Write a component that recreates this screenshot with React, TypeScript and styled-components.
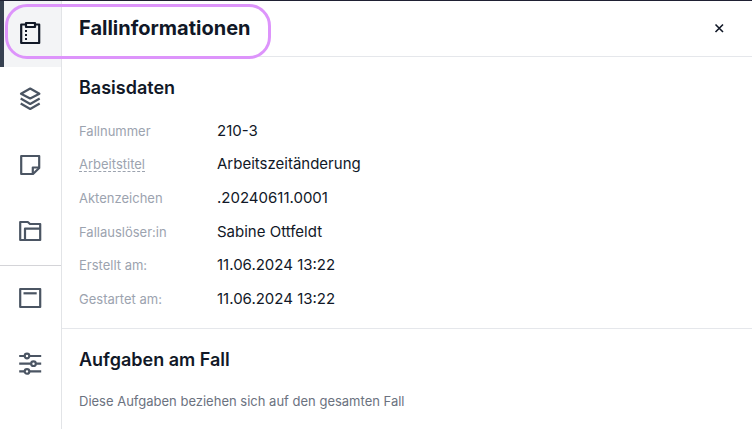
import React from 'react';
import styled, { createGlobalStyle } from 'styled-components';

const GlobalStyle = createGlobalStyle`
  * { box-sizing: border-box; }
  body {
    margin: 0;
    background: #ffffff;
    color: #111827;
    font-family: Inter, 'Liberation Sans', sans-serif;
  }
  h1, h2, p, dl, dd { margin: 0; }
`;

const Page = styled.div`
  position: relative;
  display: flex;
  min-height: 100vh;
  border-top: 1px solid #1f2033;
`;

const Sidebar = styled.nav`
  display: flex;
  flex-direction: column;
  flex: none;
  width: 62px;
  border-right: 1px solid #e2e4e7;
`;

const NavGroup = styled.div`
  display: flex;
  flex-direction: column;

  & + & { border-top: 1px solid #d4d4d8; }
`;

const NavButton = styled.button<{ $active?: boolean }>`
  position: relative;
  display: flex;
  height: 66px;
  padding: 20px 0 0 18px;
  border: 0;
  background: ${(p) => (p.$active ? '#f3f4f6' : 'transparent')};
  color: ${(p) => (p.$active ? '#111827' : '#4b5563')};
  cursor: pointer;

  &::before {
    content: '';
    position: absolute;
    inset: 0 auto 0 0;
    width: 4px;
    background: ${(p) => (p.$active ? '#374151' : 'transparent')};
  }
`;

const Icon = styled.svg`
  display: block;
  width: 24px;
  height: 24px;
  fill: none;
  stroke: currentColor;
  stroke-width: 2.2;
  stroke-linejoin: round;
`;

const Panel = styled.main`
  flex: 1;
  min-width: 0;
`;

const Header = styled.header`
  display: flex;
  align-items: center;
  justify-content: space-between;
  height: 56px;
  padding: 0 24px 2px 17px;
  border-bottom: 1px solid #e5e7eb;
`;

const Title = styled.h1`
  font-size: 20px;
  line-height: 28px;
  font-weight: 700;
`;

const CloseButton = styled.button`
  display: flex;
  padding: 0;
  border: 0;
  background: transparent;
  color: #111827;
  cursor: pointer;
`;

const CloseIcon = styled.svg`
  width: 18px;
  height: 18px;
  fill: none;
  stroke: currentColor;
  stroke-width: 1.6;
`;

const Section = styled.section`
  padding: 17px;

  & + & { border-top: 1px solid #e5e7eb; }
`;

const SectionTitle = styled.h2`
  font-size: 18px;
  line-height: 28px;
  font-weight: 600;
`;

const Details = styled.dl`
  display: grid;
  grid-auto-rows: 1fr;
  min-height: 202px;
  margin-top: 12px;
  margin-bottom: -5px;
`;

const DetailRow = styled.div`
  display: grid;
  grid-template-columns: 138px 1fr;
  align-items: center;
`;

const Label = styled.dt`
  font-size: 13px;
  line-height: 16px;
  color: #9ca3af;
`;

const Hint = styled.abbr`
  display: inline-block;
  line-height: 14px;
  border-bottom: 1px dashed #9ca3af;
  text-decoration: none;
`;

const Value = styled.dd`
  font-size: 15px;
  line-height: 24px;
`;

const Description = styled.p`
  margin-top: 17px;
  font-size: 13px;
  line-height: 20px;
  color: #6b7280;
`;

const Highlight = styled.div`
  position: absolute;
  top: 3px;
  left: 5px;
  width: 266px;
  height: 55px;
  border: 3px solid #dd94fb;
  border-radius: 22px;
  pointer-events: none;
`;

const details = [
  { label: 'Fallnummer', value: '210-3' },
  { label: 'Arbeitstitel', value: 'Arbeitszeitänderung', hint: true },
  { label: 'Aktenzeichen', value: '.20240611.0001' },
  { label: 'Fallauslöser:in', value: 'Sabine Ottfeldt' },
  { label: 'Erstellt am:', value: '11.06.2024 13:22' },
  { label: 'Gestartet am:', value: '11.06.2024 13:22' },
];

export default function App() {
  return (
    <>
      <GlobalStyle />
      <Page>
        <Sidebar>
          <NavGroup>
            <NavButton type="button" $active aria-label="Fallinformationen">
              <Icon viewBox="0 0 24 24">
                <path d="M8 3.5H3.2V22H21.2V3.5H17M8 2H17V6H8Z" />
                <path d="M7 10H9M7 14H9M7 18H9" />
              </Icon>
            </NavButton>
            <NavButton type="button" aria-label="Ebenen">
              <Icon viewBox="0 0 24 24">
                <path d="M12.2 1.5L21.4 6.7L12.2 11.5L3 6.7Z" />
                <path d="M2.7 11.5L12.2 17L21.7 11.5M2.7 16.5L12.2 22L21.7 16.5" />
              </Icon>
            </NavButton>
            <NavButton type="button" aria-label="Notizen">
              <Icon viewBox="0 0 24 24">
                <path d="M3.2 3H21.2V15L15 21H3.2Z" />
                <path d="M21 14.5H14.8V21" />
              </Icon>
            </NavButton>
            <NavButton type="button" aria-label="Dokumente">
              <Icon viewBox="0 0 24 24">
                <path d="M2.2 3H9.8L12 5H22.2V21H2.2Z" />
                <path d="M7 21V9.7H22" />
              </Icon>
            </NavButton>
          </NavGroup>
          <NavGroup>
            <NavButton type="button" aria-label="Formular">
              <Icon viewBox="0 0 24 24">
                <path d="M2.2 3H22.2V21H2.2Z" />
                <path d="M5.5 7.3H18.7" />
              </Icon>
            </NavButton>
            <NavButton type="button" aria-label="Einstellungen">
              <Icon viewBox="0 0 24 24">
                <path d="M1.2 4H6.4M11.6 4H23.2M1.2 11.7H12.9M18.1 11.7H23.2M1.2 19.4H6.4M11.6 19.4H23.2" />
                <circle cx="9" cy="4" r="2.3" />
                <circle cx="15.5" cy="11.7" r="2.3" />
                <circle cx="9" cy="19.4" r="2.3" />
              </Icon>
            </NavButton>
          </NavGroup>
        </Sidebar>
        <Panel>
          <Header>
            <Title>Fallinformationen</Title>
            <CloseButton type="button" aria-label="Schließen">
              <CloseIcon viewBox="0 0 18 18">
                <path d="M5.5 5.5L13 13M13 5.5L5.5 13" />
              </CloseIcon>
            </CloseButton>
          </Header>
          <Section>
            <SectionTitle>Basisdaten</SectionTitle>
            <Details>
              {details.map((item) => (
                <DetailRow key={item.label}>
                  <Label>{item.hint ? <Hint>{item.label}</Hint> : item.label}</Label>
                  <Value>{item.value}</Value>
                </DetailRow>
              ))}
            </Details>
          </Section>
          <Section>
            <SectionTitle>Aufgaben am Fall</SectionTitle>
            <Description>Diese Aufgaben beziehen sich auf den gesamten Fall</Description>
          </Section>
        </Panel>
        <Highlight />
      </Page>
    </>
  );
}
